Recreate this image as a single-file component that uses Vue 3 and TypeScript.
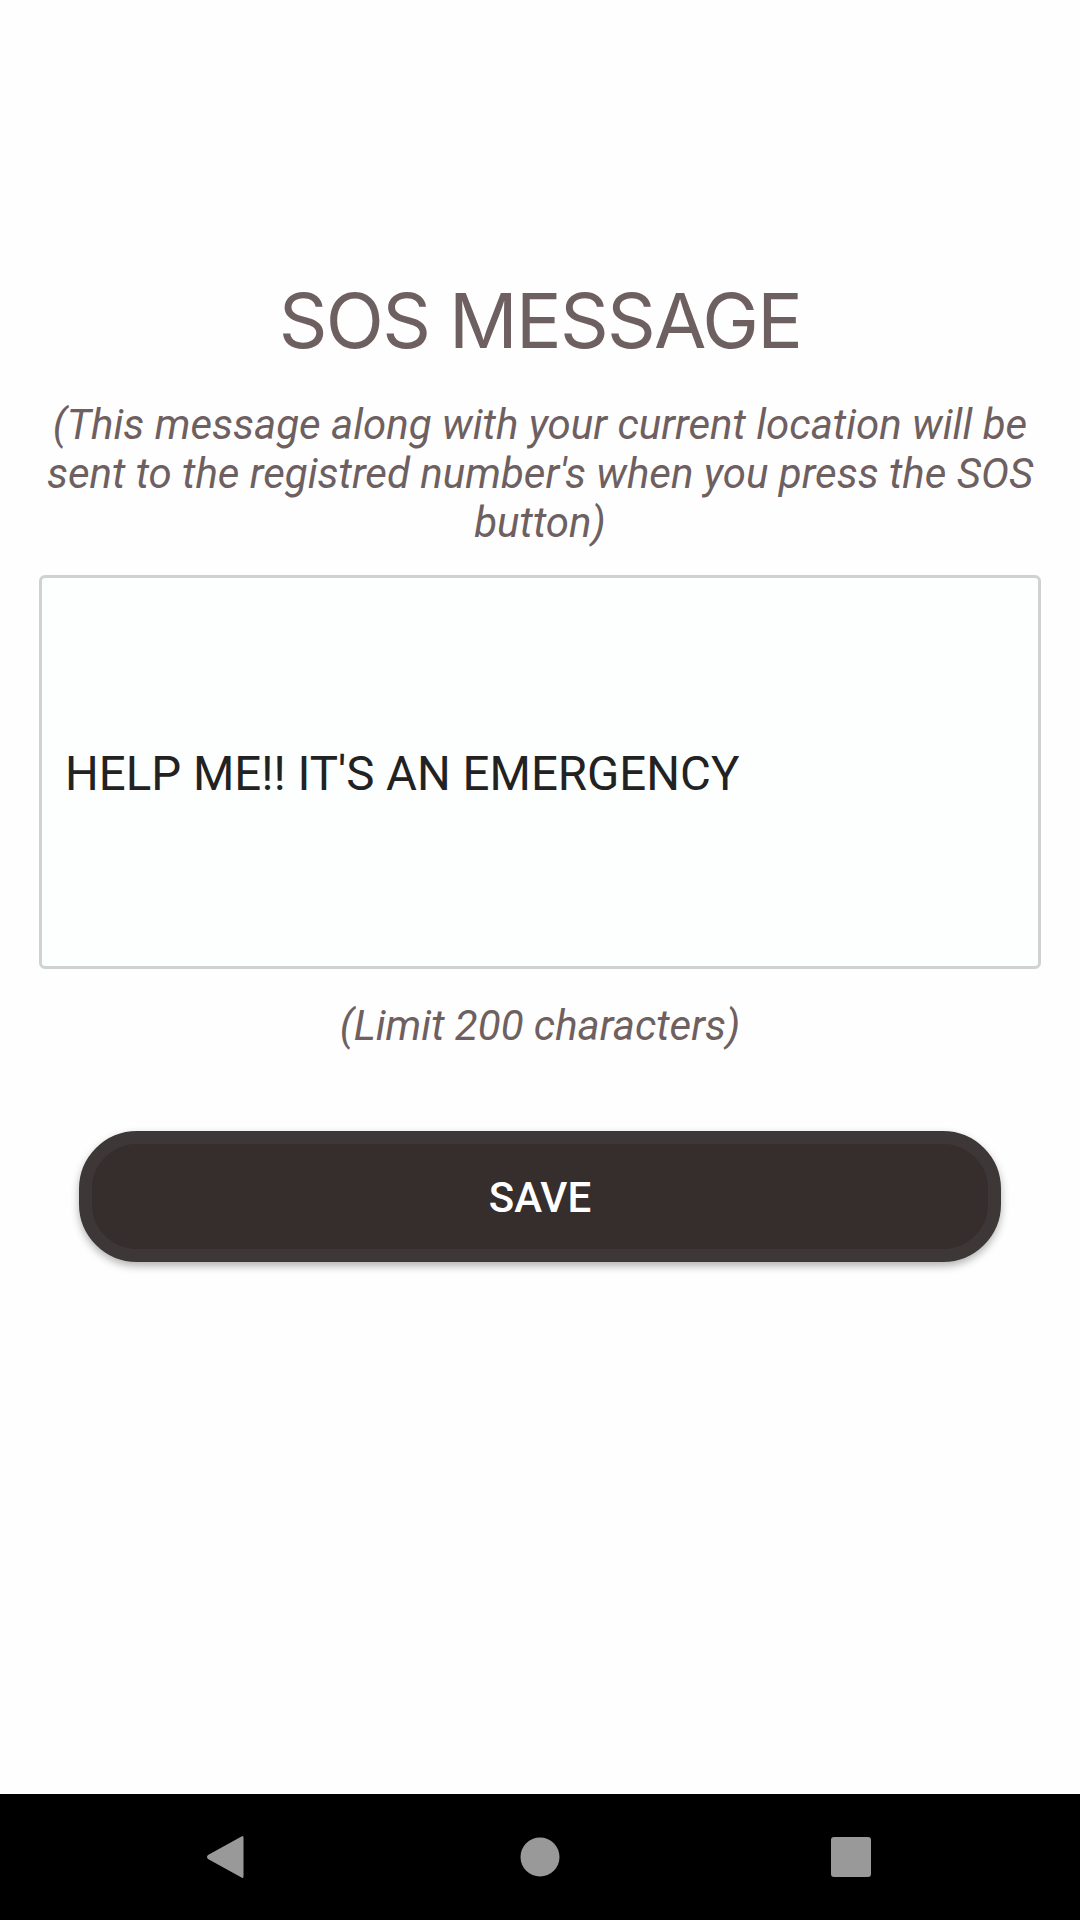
<script setup lang="ts">
const title = 'SOS MESSAGE'
const hint = "(This message along with your current location will be sent to the registred number's when you press the SOS button)"
const message = "HELP ME!! IT'S AN EMERGENCY"
const limit = '(Limit 200 characters)'
</script>

<template>
  <div class="screen">
    <main class="content">
      <h1 class="title">{{ title }}</h1>
      <p class="hint">{{ hint }}</p>
      <div class="field" role="textbox">{{ message }}</div>
      <p class="limit">{{ limit }}</p>
      <button class="save" type="button">SAVE</button>
    </main>
    <nav class="navbar">
      <svg class="back" width="38" height="44" viewBox="0 0 38 44">
        <path d="M35.5 1.5 Q37.5 0 37.5 3 V41 Q37.5 44 35.5 42.5 L2 24 Q0 22 2 20 Z" fill="#999" />
      </svg>
      <svg class="home" width="40" height="40" viewBox="0 0 40 40">
        <circle cx="20" cy="20" r="19.5" fill="#999" />
      </svg>
      <svg class="recent" width="40" height="40" viewBox="0 0 40 40">
        <rect x="0" y="0" width="40" height="40" rx="3" fill="#999" />
      </svg>
    </nav>
  </div>
</template>

<style>
body { margin: 0; background: #fff; }
</style>

<style scoped>
.screen {
  width: 1080px;
  height: 1920px;
  display: flex;
  flex-direction: column;
  background: #fefefe;
  font-family: Roboto, sans-serif;
}
.content {
  flex: 1;
  display: flex;
  flex-direction: column;
  align-items: center;
  padding: 270px 39px 0;
  box-sizing: border-box;
}
.title {
  margin: 0;
  font-family: Inter, sans-serif;
  font-weight: 400;
  font-size: 76px;
  letter-spacing: -1.7px;
  line-height: 100px;
  color: #6e6060;
}
.hint {
  margin: 30px 0 0;
  width: 1002px;
  font-style: italic;
  font-size: 42px;
  line-height: 49px;
  text-align: center;
  color: #6e6060;
}
.field {
  margin-top: 28px;
  width: 1002px;
  height: 394px;
  box-sizing: border-box;
  display: flex;
  align-items: center;
  padding: 4px 23px 0;
  border: 3px solid #cfd2d2;
  border-radius: 6px;
  background: #fdfefe;
  font-size: 47.4px;
  color: #222;
}
.limit {
  margin: 32px 0 0;
  font-style: italic;
  font-size: 42px;
  line-height: 49px;
  color: #6e6060;
}
.save {
  margin-top: 81px;
  width: 922px;
  height: 131px;
  box-sizing: border-box;
  padding: 2px 0 0;
  border: 13px solid #3d3737;
  border-radius: 58px;
  background: #362d2d;
  color: #fff;
  font-family: Roboto, sans-serif;
  font-weight: 500;
  font-size: 42px;
  box-shadow: 0 4px 8px rgba(0, 0, 0, 0.3);
}
.navbar {
  height: 126px;
  flex: none;
  box-sizing: border-box;
  background: #000;
  display: flex;
  align-items: center;
  padding-left: 206px;
}
.home {
  margin-left: 276px;
}
.recent {
  margin-left: 271px;
}
</style>
